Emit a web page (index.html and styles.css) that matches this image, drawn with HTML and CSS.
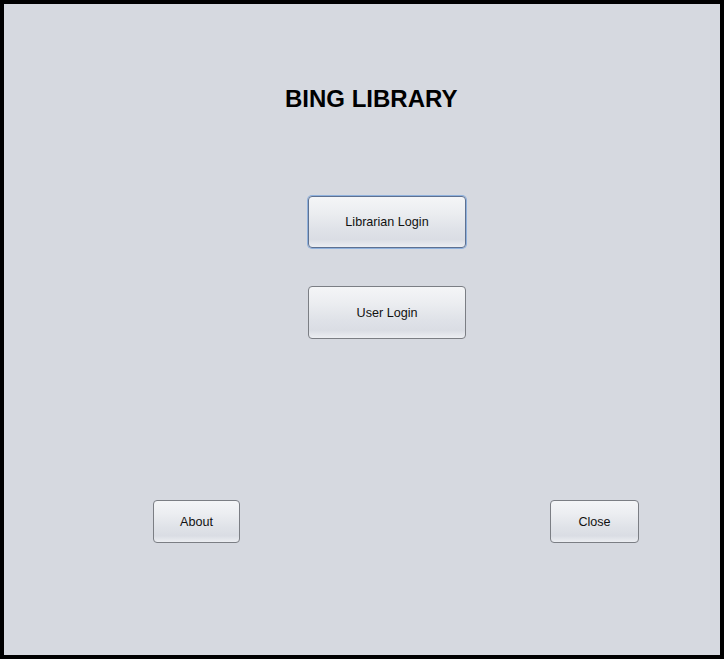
FILE: index.html
```html
<!DOCTYPE html>
<html>
<head>
<meta charset="utf-8">
<link rel="stylesheet" href="styles.css">
</head>
<body>
<div class="frame">
  <h1 class="title">BING LIBRARY</h1>
  <button class="btn btn-main btn-focus">Librarian Login</button>
  <button class="btn btn-main btn-second">User Login</button>
  <div class="bottom-row">
    <button class="btn btn-about">About</button>
    <button class="btn btn-close">Close</button>
  </div>
</div>
</body>
</html>
```
FILE: styles.css
```css
html, body {
  margin: 0;
  padding: 0;
  background: #000;
}
.frame {
  box-sizing: border-box;
  width: 724px;
  height: 659px;
  border: 4px solid #000;
  background: #d6d9e0;
  display: flex;
  flex-direction: column;
  align-items: flex-start;
  font-family: "Liberation Sans", Arial, sans-serif;
}
.title {
  margin: 81px 0 0 281px;
  font-size: 24px;
  line-height: 27px;
  font-weight: bold;
  color: #000;
}
.btn {
  box-sizing: border-box;
  font-family: "Liberation Sans", Arial, sans-serif;
  font-size: 12.6px;
  color: #111;
  border: 1px solid #7b7e84;
  border-radius: 4px;
  background: linear-gradient(to bottom, #f4f5f7 0%, #eceef1 30%, #dfe2e8 65%, #dadde4 85%, #eceef2 100%);
  padding: 0;
  cursor: default;
}
.btn-main {
  width: 158px;
  height: 52px;
  margin-left: 304px;
}
.btn-focus {
  margin-top: 84px;
  border-color: #5e7191;
  box-shadow: 0 0 0 1px #8fb1dd;
}
.btn-second {
  margin-top: 38px;
  height: 53px;
}
.bottom-row {
  margin-top: 161px;
  margin-left: 149px;
  display: flex;
  gap: 310px;
}
.btn-about {
  width: 87px;
  height: 43px;
}
.btn-close {
  width: 89px;
  height: 43px;
}
```
